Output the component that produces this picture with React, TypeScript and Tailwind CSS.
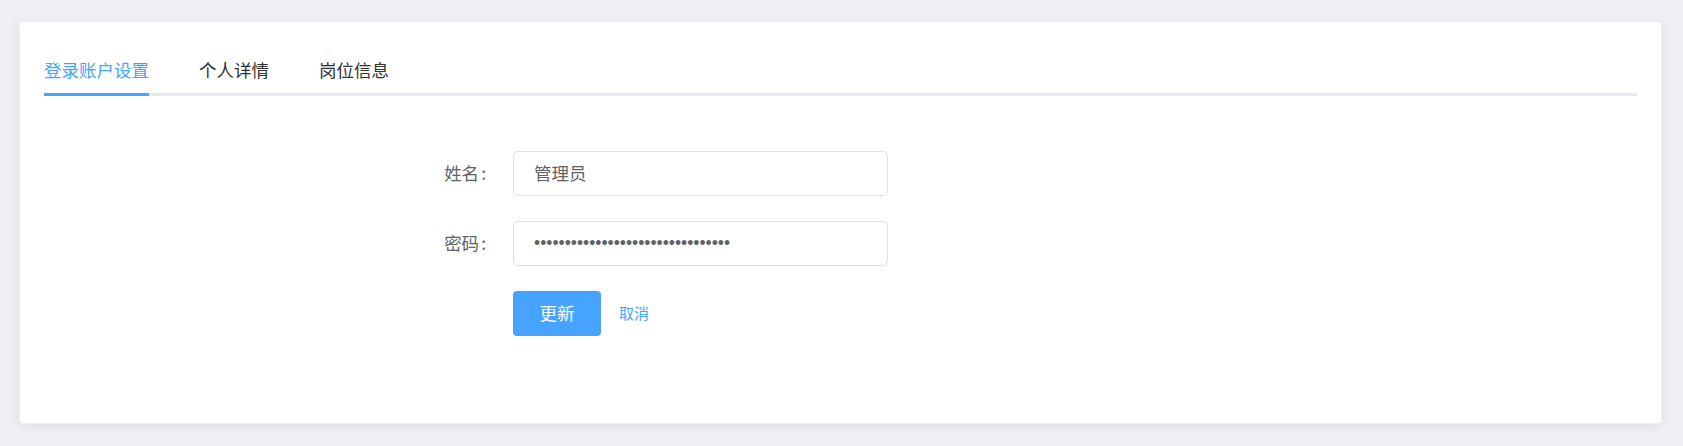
import React from "react";

const font = { fontFamily: '"Noto Sans CJK SC", "Liberation Sans", sans-serif' };

export default function App() {
  const tabs = ["登录账户设置", "个人详情", "岗位信息"];
  return (
    <div
      className="w-full h-[446px] bg-[#eff0f4] pl-[19px] pr-[21px] pt-[21px] box-border"
      style={font}
    >
      <div className="h-[403px] box-border bg-white rounded-[4px] border border-[#ebeef5] shadow-[0_2px_12px_0_rgba(0,0,0,0.08)] px-[24px] pt-[24px]">
        {/* Tabs */}
        <div className="flex border-b-[3px] border-[#e4e7ed]">
          {tabs.map((t, i) => (
            <div key={t} className={i === 0 ? "pr-[25px]" : "px-[25px]"}>
              <div
                className={
                  "h-[50px] -mb-[3px] flex items-center text-[17.5px] leading-none " +
                  (i === 0
                    ? "border-b-[3px] border-[#46a3ff] text-[#46a3ff]"
                    : "border-b-[3px] border-transparent text-[#303133]")
                }
              >
                {t}
              </div>
            </div>
          ))}
        </div>

        {/* Form */}
        <div className="mt-[55px] ml-[329px] flex flex-col gap-[25px]">
          <div className="flex items-center">
            <div className="w-[140px] pr-[27px] text-right text-[17.5px] text-[#606266]">
              姓名<span className="ml-[2px]">:</span>
            </div>
            <div className="w-[375px] h-[45px] box-border border border-[#dcdfe6] rounded-[5px] pl-[20px] flex items-center text-[17.5px] text-[#606266]">
              管理员
            </div>
          </div>
          <div className="flex items-center">
            <div className="w-[140px] pr-[27px] text-right text-[17.5px] text-[#606266]">
              密码<span className="ml-[2px]">:</span>
            </div>
            <div className="w-[375px] h-[45px] box-border border border-[#dcdfe6] rounded-[5px] pl-[20px] flex items-center text-[17.5px] text-[#606266]">
              <span style={{ fontFamily: '"Liberation Sans", sans-serif' }}>
                {"•".repeat(32)}
              </span>
            </div>
          </div>
          <div className="flex items-center">
            <div className="w-[140px]" />
            <button className="w-[88px] h-[45px] rounded-[4px] bg-[#46a3ff] text-white text-[17.5px] flex items-center justify-center">
              更新
            </button>
            <span className="ml-[18px] text-[15px] text-[#46a3ff]">取消</span>
          </div>
        </div>
      </div>
    </div>
  );
}
